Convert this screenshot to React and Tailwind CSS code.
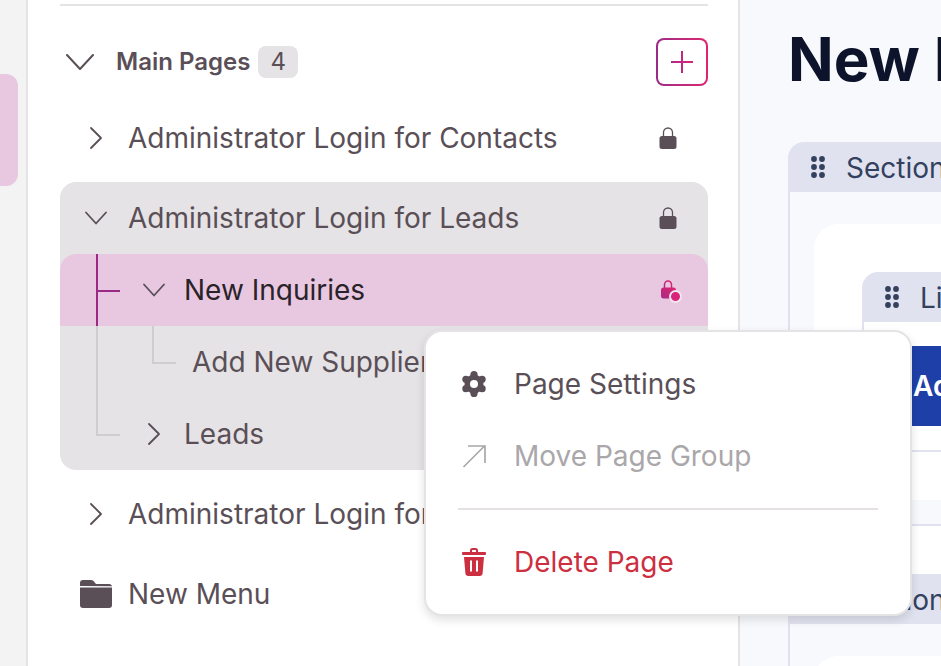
const Chevron = ({ down }) => (
  <svg viewBox="0 0 24 24" className="w-6 h-6" fill="none" stroke="currentColor" strokeWidth="1.8" strokeLinecap="round" strokeLinejoin="round">
    {down ? <path d="M2 6.500l10 11 10-11" /> : <path d="M7 2l10 10-10 10" />}
  </svg>
)

const Lock = ({ active }) => (
  <span className="relative block w-[18px] h-[22px]">
    <svg viewBox="0 0 18 22" className="w-[18px] h-[22px]">
      <defs>
        <linearGradient id="lockGrad" x1="0" x2="1" y1="1" y2="0">
          <stop offset="0" stopColor="#a82a86" />
          <stop offset="1" stopColor="#e0246f" />
        </linearGradient>
      </defs>
      {active ? (
        <>
          <path d="M5.500 10V5.500a3.500 3.500 0 0 1 7 0V10" fill="none" stroke="url(#lockGrad)" strokeWidth="1.500" />
          <rect x="2" y="8.500" width="15" height="11" rx="2.500" fill="url(#lockGrad)" />
        </>
      ) : (
        <>
          <path d="M4.500 10V5.500a4.500 4.500 0 0 1 9 0V10" fill="none" stroke="#5a4f57" strokeWidth="1.300" />
          <rect x="0.500" y="9" width="17" height="13" rx="2.500" fill="#5a4f57" />
        </>
      )}
    </svg>
    {active && <span className="absolute left-[10px] top-[11px] w-[13px] h-[13px] rounded-full bg-[#d9247a] border-2 border-[#f3e6ee]" />}
  </span>
)

const Dots = () => (
  <svg viewBox="0 0 14 22" className="w-[14px] h-[22px] shrink-0" fill="#33415f">
    <circle cx="3" cy="3" r="2.900" /><circle cx="11" cy="3" r="2.900" />
    <circle cx="3" cy="11" r="2.900" /><circle cx="11" cy="11" r="2.900" />
    <circle cx="3" cy="19" r="2.900" /><circle cx="11" cy="19" r="2.900" />
  </svg>
)

const Gear = () => (
  <svg viewBox="0 0 28 28" className="w-7 h-7 shrink-0" fill="currentColor">
    <circle cx="16" cy="14" r="9.500" />
    <circle cx="16" cy="4.600" r="3.600" />
    <circle cx="16" cy="23.400" r="3.600" />
    <circle cx="7.900" cy="9.300" r="3.600" />
    <circle cx="24.100" cy="9.300" r="3.600" />
    <circle cx="7.900" cy="18.700" r="3.600" />
    <circle cx="24.100" cy="18.700" r="3.600" />
    <circle cx="16" cy="14" r="4" fill="#fff" />
  </svg>
)

function Row({ label, indent, lock, chevron, className = '', textClass = 'text-[#5a4f57]', children }) {
  return (
    <div className={`relative h-[72px] flex items-center pr-[31px] ${className}`}>
      {children}
      <div className={`w-6 flex justify-center shrink-0 ${indent}`}>
        {chevron === 'down' && <Chevron down />}
        {chevron === 'right' && <Chevron />}
      </div>
      <span className={`ml-5 text-[28px] whitespace-nowrap ${textClass}`}>{label}</span>
      {lock && <span className="ml-auto"><Lock active={lock === 'active'} /></span>}
    </div>
  )
}

function Sidebar() {
  return (
    <aside className="w-[712px] shrink-0 h-full border-r-2 border-[#e5e3e5] bg-white pl-8 pr-[30px] text-[#5a4f57]">
      <div className="mt-1 h-0.5 bg-[#e5e3e5]" />
      <div className="mt-8 h-12 flex items-center">
        <svg viewBox="0 0 28 16" className="ml-1.5 w-7 h-4" fill="none" stroke="#5a4f57" strokeWidth="2" strokeLinecap="round" strokeLinejoin="round">
          <path d="M1 1l13 14L27 1" />
        </svg>
        <span className="ml-[22px] text-2xl font-semibold">Main Pages</span>
        <span className="ml-2 w-10 h-8 rounded-lg bg-[#e5e3e5] flex items-center justify-center text-2xl">4</span>
        <button className="ml-auto w-[52px] h-12 rounded-lg p-0.5 bg-gradient-to-r from-[#9b2a87] to-[#e0246f]">
          <span className="w-full h-full rounded-md bg-white flex items-center justify-center">
            <svg viewBox="0 0 22 22" className="w-[22px] h-[22px]" fill="none" strokeWidth="2">
              <defs>
                <linearGradient id="plusGrad" gradientUnits="userSpaceOnUse" x1="0" x2="22" y1="0" y2="0">
                  <stop offset="0" stopColor="#b02a85" />
                  <stop offset="1" stopColor="#d9257a" />
                </linearGradient>
              </defs>
              <path d="M11 0v22M0 11h22" stroke="url(#plusGrad)" />
            </svg>
          </span>
        </button>
      </div>
      <div className="mt-4">
        <Row label="Administrator Login for Contacts" indent="ml-6" chevron="right" lock="plain" />
        <div className="mt-2 rounded-2xl bg-[#e5e3e5] overflow-hidden">
          <Row label="Administrator Login for Leads" indent="ml-6" chevron="down" lock="plain" />
          <Row label="New Inquiries" indent="ml-[82px] -mr-0.5" chevron="down" lock="active" textClass="text-[#2a2229]" className="bg-[#e8c8e0] rounded-t-2xl">
            <span className="absolute left-9 top-0 bottom-0 w-0.5 bg-[#9b2a87]" />
            <span className="absolute left-[38px] top-9 w-[22px] h-0.5 bg-[#9b2a87]" />
          </Row>
          <Row label="Add New Supplier" indent="ml-[88px]">
            <span className="absolute left-9 top-0 bottom-0 w-0.5 bg-[#cfcdcf]" />
            <span className="absolute left-[92px] top-0 w-6 h-[38px] border-l-2 border-b-2 border-[#cfcdcf]" />
          </Row>
          <Row label="Leads" indent="ml-[82px] -mr-0.5" chevron="right">
            <span className="absolute left-9 top-0 w-6 h-[38px] border-l-2 border-b-2 border-[#cfcdcf]" />
          </Row>
        </div>
        <Row label="Administrator Login for Leads" indent="ml-6" chevron="right" className="mt-2" />
        <div className="mt-2 h-[72px] flex items-center">
          <svg viewBox="0 0 32 28" className="ml-5 w-8 h-7 shrink-0" fill="#5a4f57">
            <path d="M0 6V3a3 3 0 0 1 3-3h8c1.500 0 2.500 .8 3.500 2.200L16 4h13a3 3 0 0 1 3 2v.2z" />
            <path d="M0 7.500h32V25a3 3 0 0 1-3 3H3a3 3 0 0 1-3-3z" />
          </svg>
          <span className="ml-4 text-[28px] whitespace-nowrap">New Menu</span>
        </div>
      </div>
    </aside>
  )
}

function Main() {
  return (
    <main className="flex-1 min-w-0 h-full overflow-hidden bg-[#f8f9fd] pl-12 text-[#33415f]">
      <h1 className="mt-[19px] text-[60px] leading-[80px] font-bold text-[#0c132b] whitespace-nowrap">New Inquiries</h1>
      <div className="mt-[43px] h-[50px] w-[400px] bg-[#e0e3ef] rounded-tl-2xl flex items-center pl-[23px] gap-[21px] text-[28px] whitespace-nowrap">
        <Dots />
        <span className="pt-px">Section</span>
      </div>
      <div className="w-[400px] border-l-2 border-[#e0e3ef] pl-6 pt-8">
        <div className="bg-white rounded-tl-3xl pl-12 pt-12 pb-12">
          <div className="h-[50px] w-[300px] bg-[#e0e3ef] rounded-tl-2xl flex items-center pl-[23px] gap-[21px] text-[28px] whitespace-nowrap">
            <Dots />
            <span className="pt-px">List</span>
          </div>
          <div className="w-[300px] border-l-2 border-[#e0e3ef] pt-6">
            <div className="ml-12 h-20 bg-[#1f3fa8] flex items-center text-[28px] font-semibold text-white pl-[1px]">Add</div>
            <div className="mt-6 h-[50px] border-t-2 border-[#e0e3ef]" />
            <div className="h-[26px] bg-[#f8f9fd] border-b-2 border-[#e0e3ef]" />
          </div>
        </div>
      </div>
      <div className="h-[50px] w-[400px] bg-[#e0e3ef] flex items-center pl-[23px] gap-[21px] text-[28px] whitespace-nowrap">
        <Dots />
        <span className="pt-px">Section</span>
      </div>
      <div className="w-[400px] border-l-2 border-[#e0e3ef] pl-6 pt-8 h-[60px]">
        <div className="h-10 bg-white rounded-tl-3xl" />
      </div>
    </main>
  )
}

function ContextMenu() {
  return (
    <div className="absolute left-[424px] top-[330px] w-[488px] h-[286px] pt-4 px-8 bg-white rounded-[18px] border-2 border-[#e5e3e5] shadow-[0_4px_10px_rgba(0,0,0,0.12)] text-[28px] text-[#5a4f57]">
      <div className="h-[72px] flex items-center gap-7">
        <Gear />
        <span>Page Settings</span>
      </div>
      <div className="h-[72px] flex items-center gap-7 text-[#aaa7aa]">
        <svg viewBox="0 0 28 28" className="w-7 h-7 shrink-0" fill="none" stroke="currentColor" strokeWidth="1.700">
          <path d="M5.500 25L27 3.500M10 4h17v17" />
        </svg>
        <span>Move Page Group</span>
      </div>
      <div className="mt-4 h-0.5 bg-[#e5e0e3]" />
      <div className="mt-4 h-[72px] flex items-center gap-7 text-[#cc2f3f]">
        <svg viewBox="0 0 24 28" className="ml-1 w-6 h-7 shrink-0" fill="currentColor">
          <path fillRule="evenodd" d="M8 2.500A2.500 2.500 0 0 1 10.500 0h3A2.500 2.500 0 0 1 16 2.500V4h7a1 1 0 0 1 1 1v1a1 1 0 0 1-1 1H1a1 1 0 0 1-1-1V5a1 1 0 0 1 1-1h7zM10 4h4V2.600a.6.6 0 0 0-.6-.6h-2.800a.6.6 0 0 0-.6.6z" />
          <path fillRule="evenodd" d="M2 9h20l-1.400 16.200A3 3 0 0 1 17.600 28H6.400a3 3 0 0 1-3-2.800L2 9zm6 3.500v11h2v-11zm6 0v11h2v-11z" />
        </svg>
        <span>Delete Page</span>
      </div>
    </div>
  )
}

export default function App() {
  return (
    <div className="relative flex w-[941px] h-[666px] overflow-hidden font-['Inter',sans-serif]">
      <div className="w-7 shrink-0 h-full bg-[#f3f3f3] border-r-2 border-[#e5e3e5]">
        <div className="mt-[74px] w-[18px] h-28 rounded-r-xl bg-[#e8c8e0]" />
      </div>
      <Sidebar />
      <Main />
      <ContextMenu />
    </div>
  )
}
